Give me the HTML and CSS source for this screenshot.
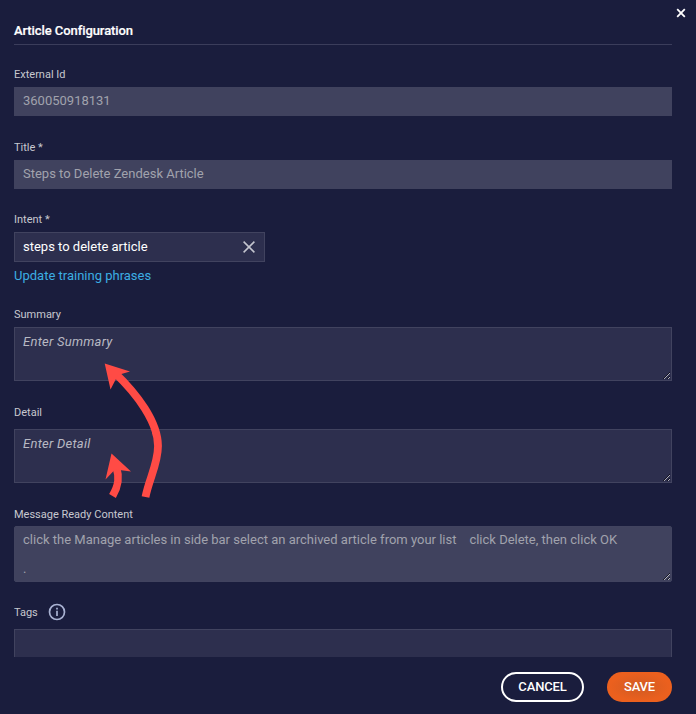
FILE: index.html
```html
<!DOCTYPE html>
<html lang="en">
<head>
<meta charset="utf-8">
<title>Article Configuration</title>
<link rel="stylesheet" href="styles.css">
</head>
<body>
<main class="dialog">
  <button class="close" aria-label="Close"><svg width="10" height="10" viewBox="0 0 10 10"><path d="M1.2 1.2 8.8 8.8M8.8 1.2 1.2 8.8"/></svg></button>
  <h1 class="heading">Article Configuration</h1>
  <form class="fields">
    <div class="field external"><label class="label">External Id</label><div class="box readonly">360050918131</div></div>
    <div class="field title"><label class="label">Title *</label><div class="box readonly">Steps to Delete Zendesk Article</div></div>
    <div class="field intent"><label class="label">Intent *</label>
      <div class="box select"><span>steps to delete article</span><svg class="clear" width="14" height="14" viewBox="0 0 14 14"><path d="M1.6 1.6 12.4 12.4M12.4 1.6 1.6 12.4"/></svg></div>
      <a class="link">Update training phrases</a>
    </div>
    <div class="field summary"><label class="label">Summary</label><textarea class="area" placeholder="Enter Summary"></textarea></div>
    <div class="field detail"><label class="label">Detail</label><textarea class="area" placeholder="Enter Detail"></textarea></div>
    <div class="field message"><label class="label">Message Ready Content</label><textarea class="area message-area" readonly>click the Manage articles in side bar select an archived article from your list    click Delete, then click OK

.</textarea></div>
    <div class="field tags"><label class="label">Tags<svg class="info" width="18" height="18" viewBox="0 0 18 18"><circle cx="9" cy="9" r="7.5"/><path d="M9 7.8V13M9 4.8v1.7"/></svg></label><div class="box tag-box"></div></div>
  </form>
  <footer class="actions"><button class="button cancel">CANCEL</button><button class="button save">SAVE</button></footer>
  <svg class="arrows" width="696" height="714" viewBox="0 0 696 714">
    <path class="shaft" d="M115 373C137 394 158 422 158 446C158 464 149 479 145.500 497"/>
    <path class="head" d="M104.700 363.500 130 371.500 118 375 110.500 389.500Z"/>
    <path class="shaft" d="M116.500 468C119.500 477 119 485 112.500 496"/>
    <path class="head" d="M111.500 453.500 131 471.500 115 469.500 105.500 479.500Z"/>
  </svg>
</main>
</body>
</html>
```
FILE: styles.css
```css
* { box-sizing: border-box; }
body { margin: 0; background: #1a1d3d; font-family: Roboto, sans-serif; overflow: hidden; }
.dialog { position: relative; width: 696px; height: 714px; padding: 16px 24px 0 14px; color: #c7c8cf; }
.close { position: absolute; top: 8px; right: 10px; width: 10px; height: 10px; padding: 0; border: 0; background: none; display: flex; }
.close path { stroke: #fff; stroke-width: 1.8; }
.heading { margin: 0; height: 29px; border-bottom: 1px solid #3b3d5b; color: #fff; font-size: 13px; font-weight: 500; line-height: 29px; letter-spacing: -.08px; -webkit-text-stroke: .2px #fff; }
.fields { height: 612px; overflow: hidden; padding-top: 19px; }
.label { display: flex; align-items: center; height: 20px; margin-bottom: 3px; font-size: 11px; }
.box { height: 29px; padding: 0 9px; display: flex; align-items: center; font-size: 13px; }
.readonly { background: #40425e; color: #a1a2ad; padding-bottom: 2px; }
.external { height: 52px; margin-bottom: 21px; }
.title { height: 52px; margin-bottom: 20px; }
.intent { height: 95px; }
.select { width: 251px; height: 30px; padding: 0 8px; justify-content: space-between; background: #2d2f4e; border: 1px solid #41435f; color: #fff; }
.select span { padding-bottom: 2px; }
.clear path { stroke: #c4c5cf; stroke-width: 1.5; }
.link { display: block; height: 20px; margin-top: 4px; color: #3caee3; font-size: 13px; line-height: 20px; }
.area { display: block; width: 100%; height: 54px; margin: 0; padding: 5px 8px; border: 1px solid #41435f; border-radius: 0; outline: 0; background: #2d2f4e; resize: both; color: #a1a2ad; font: 13px/18px Roboto, sans-serif; overflow: hidden; }
.area::placeholder { color: #b8b9c3; font-style: italic; letter-spacing: .26px; opacity: 1; }
.summary { height: 98px; }
.detail { height: 102px; }
.detail .label { margin-bottom: 7px; }
.message { height: 98px; }
.message .label { margin-bottom: 2px; }
.message-area { height: 56px; padding: 6px 8px 0; background: #40425e; border-radius: 2px; line-height: 14.500px; }
.tags .label { margin-bottom: 7px; }
.info { margin-left: 10px; fill: none; stroke: #a9b2d2; stroke-width: 1.7; }
.tag-box { height: 34px; background: #2d2f4e; border: 1px solid #41435f; }
.actions { display: flex; justify-content: flex-end; gap: 23px; padding-top: 15px; }
.button { height: 30px; padding: 0; border: 0; border-radius: 15px; color: #fff; font: 500 13px/16px Roboto, sans-serif; letter-spacing: -.15px; }
.cancel { width: 83px; border: 2px solid #fff; background: none; }
.save { width: 65px; background: radial-gradient(ellipse at center, #cf5b23 0, #eb601e 65%); }
.arrows { position: absolute; inset: 0; pointer-events: none; }
.shaft { fill: none; stroke: #ff4b45; stroke-width: 7.800; }
.head { fill: #ff4b45; }
```
